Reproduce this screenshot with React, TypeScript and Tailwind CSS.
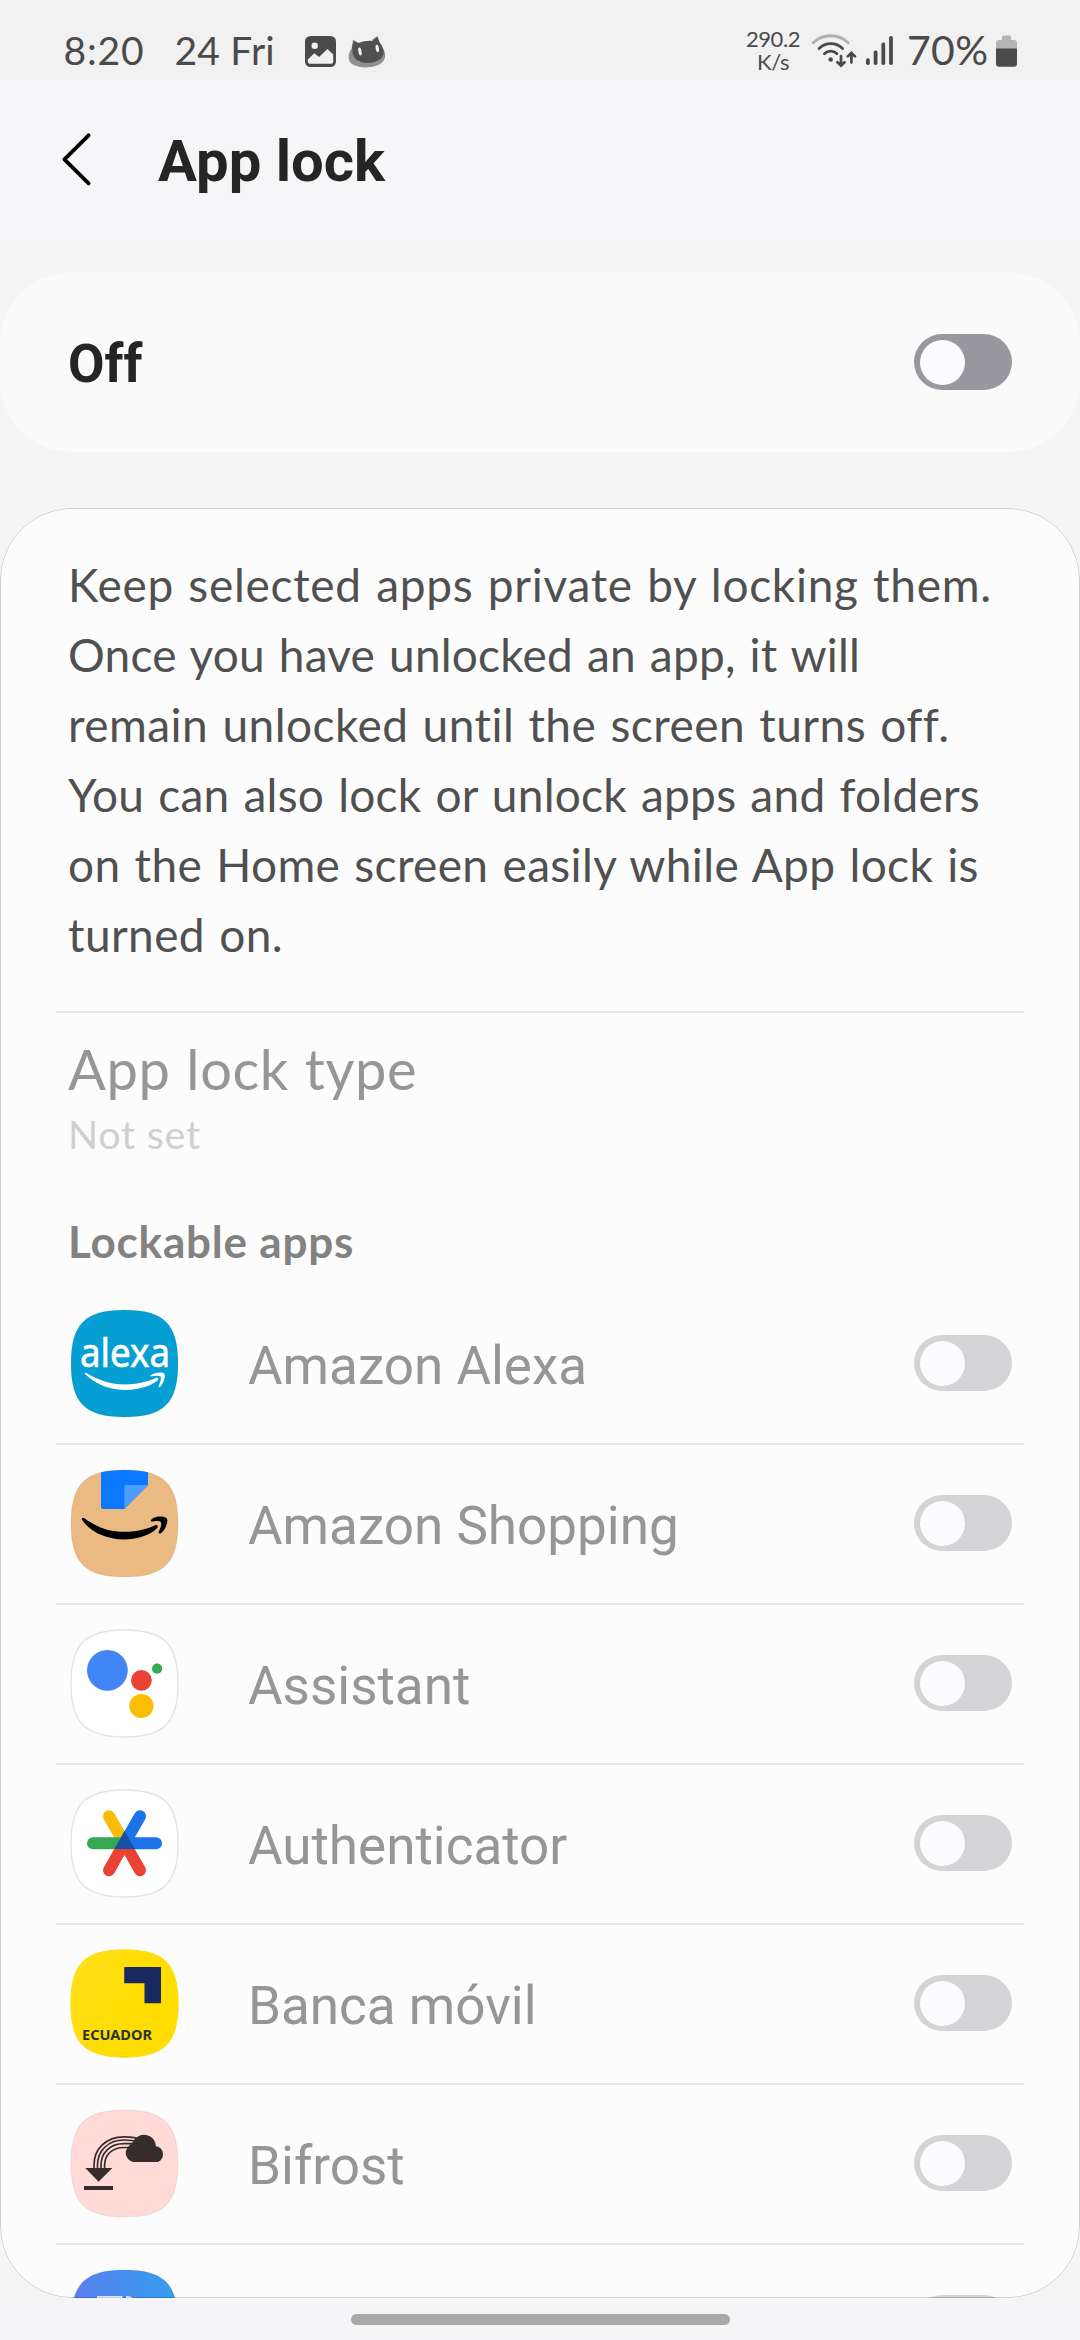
import type { ReactNode } from "react";

const SQUIRCLE = "M54.5 1C94 1 108 15 108 54.5S94 108 54.5 108S1 94 1 54.5S15 1 54.5 1Z";

function AppIcon({ id, fill, border = "#0000000c", children }: { id: string; fill: string; border?: string; children?: ReactNode }) {
  return (
    <svg width="110" height="110" viewBox="0 0 110 110" className="shrink-0">
      <defs>
        <clipPath id={id}>
          <path d={SQUIRCLE} />
        </clipPath>
        <linearGradient id="blueFade" x1="0" x2="1" y1="0.1" y2="0">
          <stop offset="0" stopColor="#5c7ff0" />
          <stop offset="1" stopColor="#349fec" />
        </linearGradient>
        <linearGradient id="yellowFade" x1="0" x2="1" y1="0" y2="0.6">
          <stop offset="0" stopColor="#ffe01e" />
          <stop offset="0.7" stopColor="#ffdd00" />
        </linearGradient>
      </defs>
      <path d={SQUIRCLE} fill={fill} />
      <g clipPath={`url(#${id})`}>{children}</g>
      <path d={SQUIRCLE} fill="none" stroke={border} strokeWidth="1.4" />
    </svg>
  );
}

function Toggle({ muted = false }: { muted?: boolean }) {
  return (
    <span className={`flex h-14 w-[98px] shrink-0 items-center rounded-full pl-[5.5px] ${muted ? "bg-[#d4d4d6]" : "bg-[#99989e]"}`}>
      <span className="size-[45px] rounded-full bg-[#fcfcff]" />
    </span>
  );
}

const apps: { name: string; icon: ReactNode }[] = [
  {
    name: "Amazon Alexa",
    icon: (
      <AppIcon id="alexa" fill="#069fd3">
        <text x="10" y="57.7" fontSize="40" fontFamily="Noto Sans, sans-serif" fill="#fff" stroke="#fff" strokeWidth="0.6" textLength="90" lengthAdjust="spacingAndGlyphs">alexa</text>
        <path d="M15 65C14.6 63.6 16 63.6 17.2 64.4C29 71.5 42 75.4 55 75.4C66 75.4 77 73 85.6 69C88 68 89.4 70 87.4 71.6C79.5 78 67.5 81 56 81C40 81 26 75.5 15 65Z" fill="#fff" />
        <path d="M80.4 66.6C84 63.6 91.5 62.8 94.2 64.4C96 67 93.6 74.6 89.8 78C88.8 78.6 88.4 78 88.8 77C90.2 73.6 91.6 69 90.6 67.6C89.4 66.2 85 66.6 81.4 67.2C80.4 67.4 79.6 67.2 80.4 66.6Z" fill="#fff" />
      </AppIcon>
    ),
  },
  {
    name: "Amazon Shopping",
    icon: (
      <AppIcon id="amazon" fill="#ebba82">
        <path d="M31 0H78V16L54.3 40H33Q31 40 31 38Z" fill="#0a79ff" />
        <path d="M54.3 18Q54.3 16 56.3 16H78L54.3 40Z" fill="#4c9dff" />
        <path d="M11.8 50.4C11.4 48.4 13.4 48.4 14.8 49.6C27 58.6 40 62.8 53.6 62.8C65 62.8 76 60.4 84.6 56.4C87.4 55.2 89 57.6 86.8 59.4C78.6 67 66 70.4 54 70.4C36 70.4 20 63 11.8 50.4Z" fill="#000" />
        <path d="M81 52.2C79.8 50.6 84.6 47.2 90 47.4C95 47.6 97.6 49 97.4 51.4C97 56.6 94.4 62 90.6 64.4C89 65 88.2 64 88.8 62.6C90.4 59.4 92 55.4 90.8 53.2C89.4 51.4 84.6 52.2 82.4 52.6C81.8 52.7 81.3 52.6 81 52.2Z" fill="#000" />
      </AppIcon>
    ),
  },
  {
    name: "Assistant",
    icon: (
      <AppIcon id="assistant" fill="#fff" border="#e4e4e4">
        <circle cx="37.4" cy="41.3" r="20.4" fill="#4285f4" />
        <circle cx="71.4" cy="51.3" r="10.4" fill="#ea4335" />
        <circle cx="87.1" cy="39.7" r="5.1" fill="#34a853" />
        <circle cx="71.4" cy="77" r="12.1" fill="#fbbc04" />
      </AppIcon>
    ),
  },
  {
    name: "Authenticator",
    icon: (
      <AppIcon id="authenticator" fill="#fff" border="#e4e4e4">
        <g strokeWidth="12" strokeLinecap="round">
          <path d="M39 27.3L54.5 54.3" stroke="#fbbc04" />
          <path d="M23 54.3H52" stroke="#34a853" />
          <path d="M39 81.3L50.5 61.3M70 81.3L58.5 61.3" stroke="#ea4335" />
          <path d="M70 27.3L54.5 54.3M57 54.3H86" stroke="#1a73e8" />
        </g>
        <path d="M44.3 60.3L54.6 42L64.9 60.3Z" fill="#174ea6" />
        <path d="M44.3 60.3H64.9L60 68H49Z" fill="#ea4335" />
        <path d="M54.5 66L49.5 75H59.5Z" fill="#fff" />
      </AppIcon>
    ),
  },
  {
    name: "Banca móvil",
    icon: (
      <AppIcon id="banca" fill="url(#yellowFade)" border="#ffdf18">
        <path d="M54.2 18H91V54.3H74.5V34.3H54.2Z" fill="#18295f" />
        <text x="12" y="91" fontSize="14.5" fontWeight="700" fontFamily="Noto Sans, sans-serif" fill="#28352f" textLength="70" lengthAdjust="spacingAndGlyphs">ECUADOR</text>
        <path d="M42 108H67" stroke="#b39b00" strokeWidth="1.4" />
      </AppIcon>
    ),
  },
  {
    name: "Bifrost",
    icon: (
      <AppIcon id="bifrost" fill="#ffdad6">
        <g fill="none" stroke="#362c2b" strokeWidth="1.7">
          <path d="M24 60V56C24 40 36 27.8 54 27.8C62 27.8 68 29 72 31" />
          <path d="M27.5 60V56C27.5 42 38 31 54 31C60 31 66 32 70 33" />
          <path d="M31 60V56C31 44 40 34.7 54 34.7H66" />
          <path d="M34.6 60V56C34.6 46 42 38.5 54 38.5H64" />
        </g>
        <path d="M15.3 59H42.3L28.6 72.8Z" fill="#362c2b" />
        <path d="M14 77H43V81H14Z" fill="#362c2b" />
        <path d="M65 53A9 9 0 0 1 57 39.5Q59.5 35.6 63 33A12 12 0 0 1 86 37.2A8.3 8.3 0 0 1 88 53Z" fill="#362c2b" />
      </AppIcon>
    ),
  },
  {
    name: "",
    icon: (
      <AppIcon id="blue" fill="url(#blueFade)">
        <path d="M27 27.3H52.5V36H27ZM56 27.3C60 27.3 64 28 66 33V36H56Z" fill="#fff" />
      </AppIcon>
    ),
  },
];

function StatusBar() {
  return (
    <header className="flex h-20 items-start bg-[#f1f1f1] pt-5 pl-[63.5px] font-[Lato,sans-serif] text-[39px] leading-[60px] whitespace-nowrap text-[#4a4a4a]">
      <span className="w-[111px] tracking-[0.8px]">8:20</span>
      <span className="w-[130.5px] tracking-[0.2px]">24 Fri</span>
      <svg width="31" height="31" viewBox="0 0 31 31" className="mt-4">
        <rect width="31" height="31" rx="5.5" fill="#4a4a4a" />
        <circle cx="9.7" cy="9.8" r="3.2" fill="#f1f1f1" />
        <path d="M2.8 23.5L9.3 17.2L14 21L22.5 13L28.2 18.5V25.5Q28.2 27.8 26 27.8H5Q2.8 27.8 2.8 25.5Z" fill="#f1f1f1" />
      </svg>
      <svg width="38" height="33" viewBox="0 0 38 33" className="mt-[15px] ml-3">
        <path d="M4 13C-0.5 18 -0.5 26 4 29C12 34 27 33.5 34 27.5C38.5 24 38 17 34 12Z" fill="#8f8f8f" />
        <path d="M3.5 14L5 4.5L10 8Z M24 5L29.5 0.8L31.5 9Z" fill="#8f8f8f" />
        <path d="M4.5 16C3.5 13.5 4.5 9.5 6 6L10.5 8C15 6.5 20 5.5 24 6L29.5 2L32 8C34.5 11 36 15 35.6 19C34.5 25 26 28 19 28C11 28 4 23 4.5 16Z" fill="#505050" />
        <ellipse cx="12" cy="16.5" rx="1.6" ry="4" transform="rotate(-10 12 16.5)" fill="#f1f1f1" />
        <ellipse cx="29.3" cy="13.5" rx="1.6" ry="3.7" transform="rotate(-10 29.3 13.5)" fill="#f1f1f1" />
      </svg>
      <div className="mt-[7px] ml-[359px] w-[56px] text-center text-[22px] leading-[23px] tracking-[-0.4px]">
        <div>290.2</div>
        <div>K/s</div>
      </div>
      <svg width="50" height="40" viewBox="0 0 50 40" fill="none" stroke="#4a4a4a" strokeWidth="2.8" strokeLinecap="round" className="mt-2.5 ml-[9px]">
        <path d="M3.2 12.8C13 3.4 28.5 3.4 38.2 12.8" stroke="#b0b0b0" />
        <path d="M9 18.6C15.5 11.9 26 11.9 32.6 18.6" />
        <path d="M14.4 23.8C18 20.2 23.4 20.2 27 23.8" />
        <circle cx="20.7" cy="29.5" r="2.2" fill="#4a4a4a" stroke="none" />
        <path d="M31 26V35.5M27.4 32.2L31 35.7L34.6 32.2M41.4 32.5V23M37.8 26.4L41.4 22.8L45 26.4" strokeWidth="2.7" />
      </svg>
      <svg width="28" height="31" viewBox="0 0 28 31" fill="#4a4a4a" className="mt-[15px] ml-[6px]">
        <rect x="0" y="23.3" width="3.8" height="6.8" rx="1.8" />
        <rect x="7.7" y="15.5" width="3.8" height="14.6" rx="1.8" />
        <rect x="15.4" y="7.6" width="3.8" height="22.5" rx="1.8" />
        <rect x="23.1" y="1" width="3.8" height="29.1" rx="1.8" />
      </svg>
      <span className="ml-[13px] w-[88px] text-[41px] tracking-[0.3px]">70%</span>
      <svg width="21" height="32" viewBox="0 0 21 32" className="mt-[15px] ml-[1px]">
        <path d="M6 5V2Q6 0.5 8 0.5H13Q15 0.5 15 2V5H18Q21 5 21 8V14H0V8Q0 5 3 5Z" fill="#b5b5b5" />
        <path d="M0 13.5H21V28.5Q21 31.7 18 31.7H3Q0 31.7 0 28.5Z" fill="#4a4a4a" />
      </svg>
    </header>
  );
}

export default function App() {
  return (
    <div className="flex h-[2340px] w-[1080px] flex-col overflow-hidden bg-[#f5f5f5] font-[Roboto,sans-serif]">
      <StatusBar />
      <div className="flex h-40 items-center bg-[#f6f6f8] pl-[61px]">
        <svg width="32" height="56" viewBox="0 0 32 56" fill="none" stroke="#000" strokeWidth="3.8" strokeLinecap="round" strokeLinejoin="round" className="-mt-[2px]">
          <path d="M27.6 4.3L3.4 28.3L27.6 52.3" />
        </svg>
        <h1 className="ml-[65px] pt-0.5 text-[58px] leading-[68px] font-bold text-[#252525]">App lock</h1>
      </div>

      <section className="mt-8 flex h-[180px] items-center justify-between rounded-[72px] bg-[#fafafa] pr-[68px] pl-[68px]">
        <span className="pt-1 text-[53px] leading-16 font-bold text-[#252525]">Off</span>
        <Toggle />
      </section>

      <main className="relative mt-14 h-[1790px] shrink-0 overflow-hidden rounded-[72px] bg-[#fcfcfc] px-14">
        <div className="pt-[42px] pl-3 font-[Lato,sans-serif]">
          <p className="text-[46px] leading-[70px] [word-spacing:2px] whitespace-nowrap text-[#505050]">
            <span className="block tracking-[0.7px]">Keep selected apps private by locking them.</span>
            <span className="block tracking-[0.2px]">Once you have unlocked an app, it will</span>
            <span className="block tracking-[0.45px]">remain unlocked until the screen turns off.</span>
            <span className="block tracking-[0.25px]">You can also lock or unlock apps and folders</span>
            <span className="block tracking-[0.35px]">on the Home screen easily while App lock is</span>
            <span className="block tracking-[0.4px]">turned on.</span>
          </p>
        </div>
        <div className="mt-[41px] border-t-2 border-[#e6e6e6] pl-3 font-[Lato,sans-serif]">
          <div className="mt-5 text-[56px] leading-[72px] tracking-[0.6px] [word-spacing:1px] text-[#969696]">App lock type</div>
          <div className="mt-[3px] text-[39.5px] leading-[52px] tracking-[0.7px] text-[#cfcfcf]">Not set</div>
          <h2 className="mt-[51px] text-[44px] leading-[60px] font-bold tracking-[0.8px] text-[#828282]">Lockable apps</h2>
        </div>
        <ul className="mt-3.5">
          {apps.map((app, i) => (
            <li key={i} className="flex h-40 items-center border-b-2 border-[#e6e6e6] pr-3 pl-3.5">
              <span className="flex w-[178px] items-center">{app.icon}</span>
              <span className="flex-1 pt-1 text-[53px] leading-16 text-[#969696]">{app.name}</span>
              <span className="pb-0.5">
                <Toggle muted />
              </span>
            </li>
          ))}
        </ul>
        <div className="pointer-events-none absolute inset-0 rounded-[72px] border border-black/18" />
      </main>

      <footer className="flex flex-1 justify-center bg-[#f5f5f7] pt-4">
        <div className="h-[11px] w-[379px] rounded-full bg-[#a9a9a9]" />
      </footer>
    </div>
  );
}
